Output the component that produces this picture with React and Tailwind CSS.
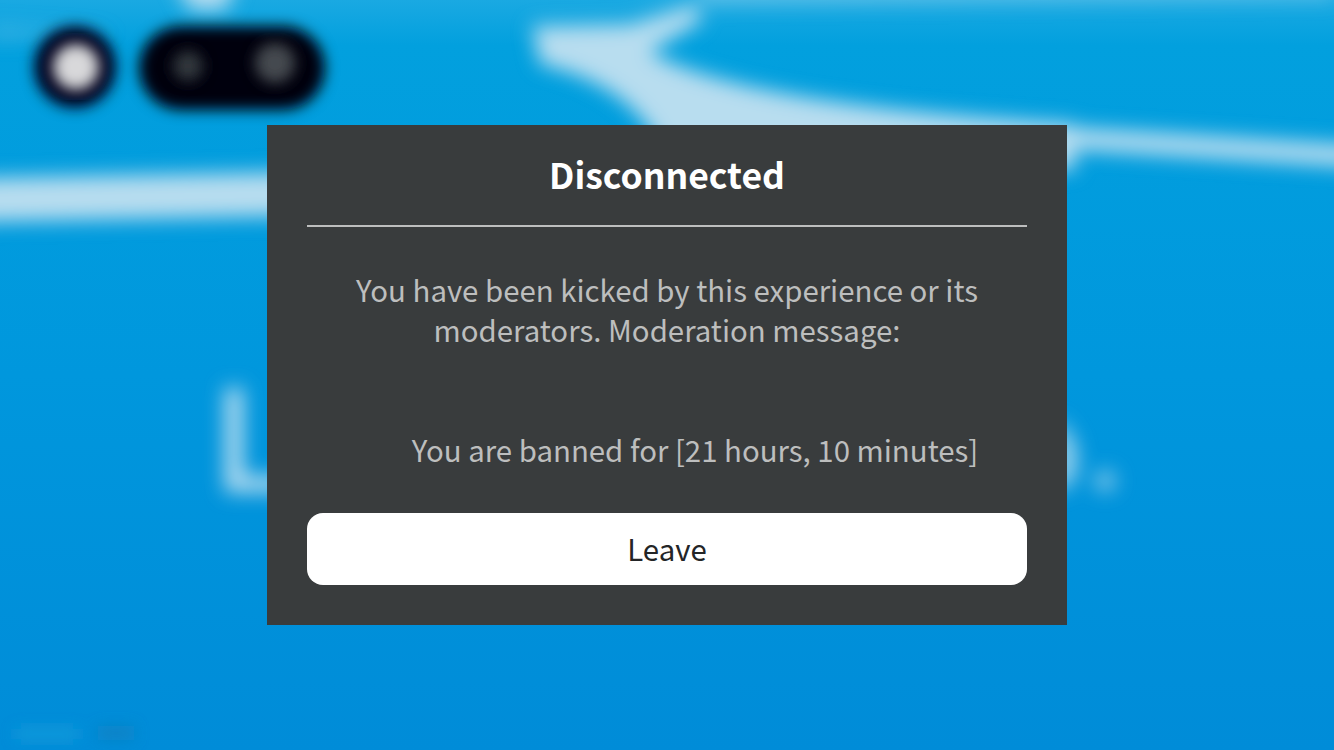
const sans = "font-['Noto_Sans_CJK_SC','Source_Sans_Pro',sans-serif]"

function BlurredScene() {
  return (
    <svg className="absolute inset-0 h-full w-full" viewBox="0 0 1334 750" preserveAspectRatio="none">
      <defs>
        <linearGradient id="sky" x1="0" y1="0" x2="0" y2="1">
          <stop offset="0" stopColor="#1aa9e2" />
          <stop offset="0.06" stopColor="#02a0de" />
          <stop offset="0.5" stopColor="#0097dd" />
          <stop offset="1" stopColor="#008cd8" />
        </linearGradient>
        <filter id="soft" x="-20%" y="-20%" width="140%" height="140%">
          <feGaussianBlur stdDeviation="10" />
        </filter>
        <filter id="softer" x="-20%" y="-20%" width="140%" height="140%">
          <feGaussianBlur stdDeviation="7" />
        </filter>
      </defs>
      <rect width="1334" height="750" fill="url(#sky)" />
      <g filter="url(#soft)" fill="#b8ddef">
        {/* stripes */}
        <path d="M-30 178 L290 172 L290 216 L-30 222 Z" />
        <path d="M1050 126 L1370 146 L1370 168 L1050 148 Z" />
        <path d="M532 26 L630 24 L695 4 L702 20 L650 52 C720 92 880 112 1075 124 L1075 170 L668 170 C655 116 610 80 540 64 Z" />
        <path d="M170 -30 L240 -30 L226 10 L190 10 Z" />
        <path d="M700 -18 L1334 -18 L1334 -2 L700 4 Z" opacity="0.45" />
        <path d="M-10 24 L120 32 L-10 42 Z" opacity="0.25" />
        {/* blurred title */}
        <path d="M225 388 H243 V476 H285 V492 H225 Z" />
        <path d="M1055 418 C1074 432 1080 452 1076 470 C1074 482 1068 490 1055 492 Z" opacity="0.85" />
        <circle cx="1105" cy="481" r="10" opacity="0.8" />
      </g>
      <g filter="url(#softer)">
        <circle cx="75" cy="67" r="41" fill="#00001a" />
        <rect x="139" y="26" width="186" height="84" rx="42" fill="#000008" />
        <rect x="16" y="728" width="62" height="12" fill="#1aa0dc" opacity="0.7" />
        <rect x="98" y="726" width="36" height="14" fill="#0a7fc0" opacity="0.8" />
      </g>
      <g filter="url(#softer)">
        <circle cx="76" cy="67" r="23" fill="#d8d8da" />
        <circle cx="188" cy="66" r="15" fill="#33373e" />
        <circle cx="275" cy="63" r="20" fill="#444950" />
      </g>
    </svg>
  )
}

export default function App() {
  return (
    <div className={`relative flex h-[750px] w-[1334px] items-center justify-center overflow-hidden ${sans}`}>
      <BlurredScene />
      <div className="relative flex h-[500px] w-[800px] flex-col bg-[#393c3d] px-10">
        <h1 className="flex h-[102px] shrink-0 items-center justify-center border-b-2 border-[#bdbebe] pb-[2px] text-[35.5px] leading-none font-bold text-white">
          Disconnected
        </h1>
        <div className="mt-[42px] text-center text-[29.4px] leading-[40px] text-[#bdbebe]">
          <p>You have been kicked by this experience or its</p>
          <p>moderators. Moderation message:</p>
          <p className="mt-20 pl-14">You are banned for [21 hours, 10 minutes]</p>
        </div>
        <button className="mt-[44px] h-[72px] w-full rounded-2xl bg-white pb-[2px] text-[29.4px] text-[#232527]">
          Leave
        </button>
      </div>
    </div>
  )
}
